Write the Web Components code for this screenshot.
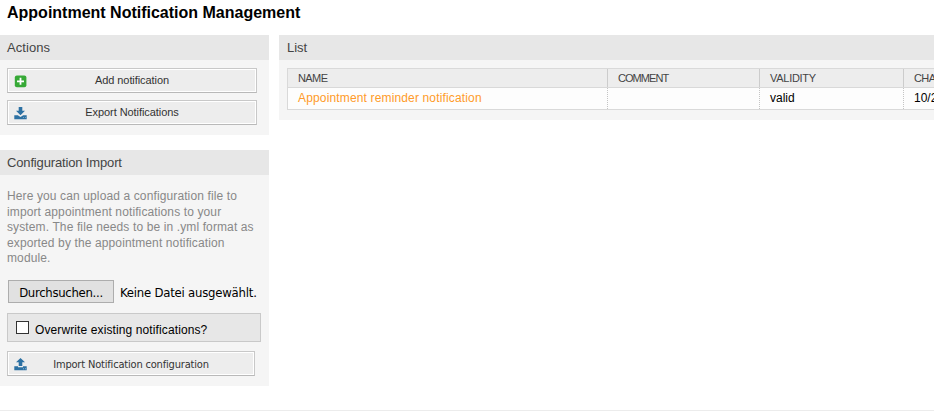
<!DOCTYPE html>
<html lang="en"><head><meta charset="utf-8"><title>Appointment Notification Management</title>
<style>html,body{margin:0;background:#fff;height:412px;overflow:hidden;font:12px "Liberation Sans",Arial,sans-serif;color:#000}</style></head>
<body><notification-page></notification-page>
<script>
const define=(name,html)=>customElements.define(name,class extends HTMLElement{
  constructor(){super();this.attachShadow({mode:'open'}).innerHTML=html;}
});
define('widget-panel',`<style>
:host{display:block;background:#f5f5f5;box-sizing:border-box}
header{height:25px;background:#e7e7e7;padding-left:7px;font-size:13px;line-height:25px;color:#444;box-sizing:border-box;letter-spacing:var(--title-spacing,0)}
:host(.list) header{padding-left:8px}
</style><header><slot name="title"></slot></header><slot></slot>`);
define('action-button',`<style>
:host{display:block;width:250px;height:25px;box-sizing:border-box;border:1px solid #c8c8c8;border-bottom-color:#b9b9b9;font-size:11px;color:#333}
button{all:unset;display:grid;grid-template-columns:18px 1fr 18px;width:100%;height:23px;box-sizing:border-box;background:#ededed;border:1px solid #fff;padding:0 4px;align-items:center;text-align:center}
.label{line-height:13px;padding-bottom:1px;white-space:nowrap}
.icon{display:flex;justify-content:flex-start;padding:2px 0 0 1px}
</style><button><span class="icon"><slot name="icon"></slot></span><span class="label"><slot></slot></span></button>`);
define('tool-icon',`<style>:host{display:block;width:13px;height:13px}svg{display:none;width:13px;height:13px}
:host([kind=add]) .add,:host([kind=down]) .down,:host([kind=up]) .up{display:block}</style>
<svg class="add" viewBox="0 0 13 13"><rect x=".8" y=".5" width="11.6" height="11.7" rx="2" fill="#36a936"/><path d="M6.5 2.8v7M3 6.3h7" stroke="#fff" stroke-width="1.8"/></svg>
<svg class="down" viewBox="0 0 13 13" fill="#2d71a3"><path d="M4.7 0h3.6v3.7H11L6.5 8.2 2 3.7h2.7zM.3 8.3h3.5L6.5 10 9.2 8.3h3.5v3.9H.3z"/><path d="M9 10.2h1v.9H9zM11 10.2h1v.9h-1z" fill="#8fb3cd"/></svg>
<svg class="up" viewBox="0 0 13 13" fill="#2d71a3"><path d="M6.5 0 11 4.3H8.3V8H4.7V4.3H2zM.3 8.3H4v.9h5v-.9h3.7v3.9H.3z"/><path d="M9 10.3h1v.9H9zM11 10.3h1v.9h-1z" fill="#8fb3cd"/></svg>`);
define('file-picker',`<style>
:host{display:flex;align-items:center;gap:6px;height:23px;font:condensed 13px "DejaVu Sans","Noto Sans",sans-serif;white-space:nowrap}
button{box-sizing:border-box;width:106px;height:23px;border:1px solid #adadad;background:#e1e1e1;padding:1px 0 0;font:inherit;color:#000;line-height:19px;letter-spacing:-.3px}
span{line-height:20px;padding-top:2px;letter-spacing:-.22px}
</style><button>Durchsuchen...</button><span>Keine Datei ausgewählt.</span>`);
define('check-field',`<style>
:host{display:flex;box-sizing:border-box;width:254px;height:29px;border:1px solid #c9c9c9;background:#e7e7e7;padding:7px 8px}
i{width:13px;height:13px;box-sizing:border-box;border:1px solid #333;background:#fff;margin-right:6px}
span{line-height:14px;padding-top:2px;white-space:nowrap;letter-spacing:.11px}
</style><i></i><span><slot></slot></span>`);
define('notification-table',`<style>
:host{display:block;width:800px;box-sizing:border-box;border:1px solid #d9d9d9;background:#fdfdfd}
.row{display:grid;grid-template-columns:320px 152px 144px 1fr;height:21px}
.head{height:18px;background:#ededed;border-bottom:1px solid #d9d9d9;color:#444;font-size:11px}
.row>span{box-sizing:border-box;padding-left:10px;border-right:1px dotted #c4c4c4;line-height:20px;white-space:nowrap}
.head>span{border-right:1px solid #ccc;line-height:18px}
a{color:#ff9b29;letter-spacing:.15px}
.head>.c{letter-spacing:-.95px}.head>.n{letter-spacing:-.6px}.head>.v{letter-spacing:-.28px}
</style><div class="row head"><span class="n">NAME</span><span class="c">COMMENT</span><span class="v">VALIDITY</span><span class="n">CHANGED</span></div>
<div class="row"><span><a>Appointment reminder notification</a></span><span></span><span>valid</span><span>10/21/2016</span></div>`);
define('notification-page',`<style>
:host{display:block;height:410px;width:934px;border-bottom:1px solid #ececec;overflow:hidden}
h1{margin:0;height:35px;padding:3px 0 0 7px;font-size:16px;line-height:19px;box-sizing:border-box;white-space:nowrap}
main{display:grid;grid-template-columns:269px 655px;column-gap:10px;align-items:start}
aside{display:grid;gap:15px}
.actions{height:100px}.import{height:236px;--title-spacing:-.15px}.list{height:85px}
.actions{--title-spacing:.08px}
.stack{display:grid;gap:7px;padding:8px 7px}
.tight{letter-spacing:-.07px}
p{margin:0;padding:14px 7px 0;height:92px;box-sizing:border-box;color:#888;line-height:15.5px;white-space:nowrap;letter-spacing:.12px}
file-picker{margin:13px 0 10px 8px}
check-field{margin:0 0 9px 7px}
.upload{width:248px;margin-left:7px;font-family:"DejaVu Sans",sans-serif;font-stretch:condensed;letter-spacing:-.18px}
.upload span{display:block;padding-top:2px}
notification-table{margin:8px 0 0 8px}
</style><h1>Appointment Notification Management</h1>
<main><aside><widget-panel class="actions"><span slot="title">Actions</span><div class="stack">
<action-button class="tight"><tool-icon slot="icon" kind="add"></tool-icon>Add notification</action-button>
<action-button class="tight"><tool-icon slot="icon" kind="down"></tool-icon>Export Notifications</action-button></div></widget-panel>
<widget-panel class="import"><span slot="title">Configuration Import</span>
<p>Here you can upload a configuration file to<br>import appointment notifications to your<br>system. The file needs to be in .yml format as<br>exported by the appointment notification<br>module.</p>
<file-picker></file-picker><check-field>Overwrite existing notifications?</check-field>
<action-button class="upload"><tool-icon slot="icon" kind="up"></tool-icon><span>Import Notification configuration</span></action-button></widget-panel></aside>
<widget-panel class="list"><span slot="title">List</span><notification-table></notification-table></widget-panel></main>`);
</script></body></html>
